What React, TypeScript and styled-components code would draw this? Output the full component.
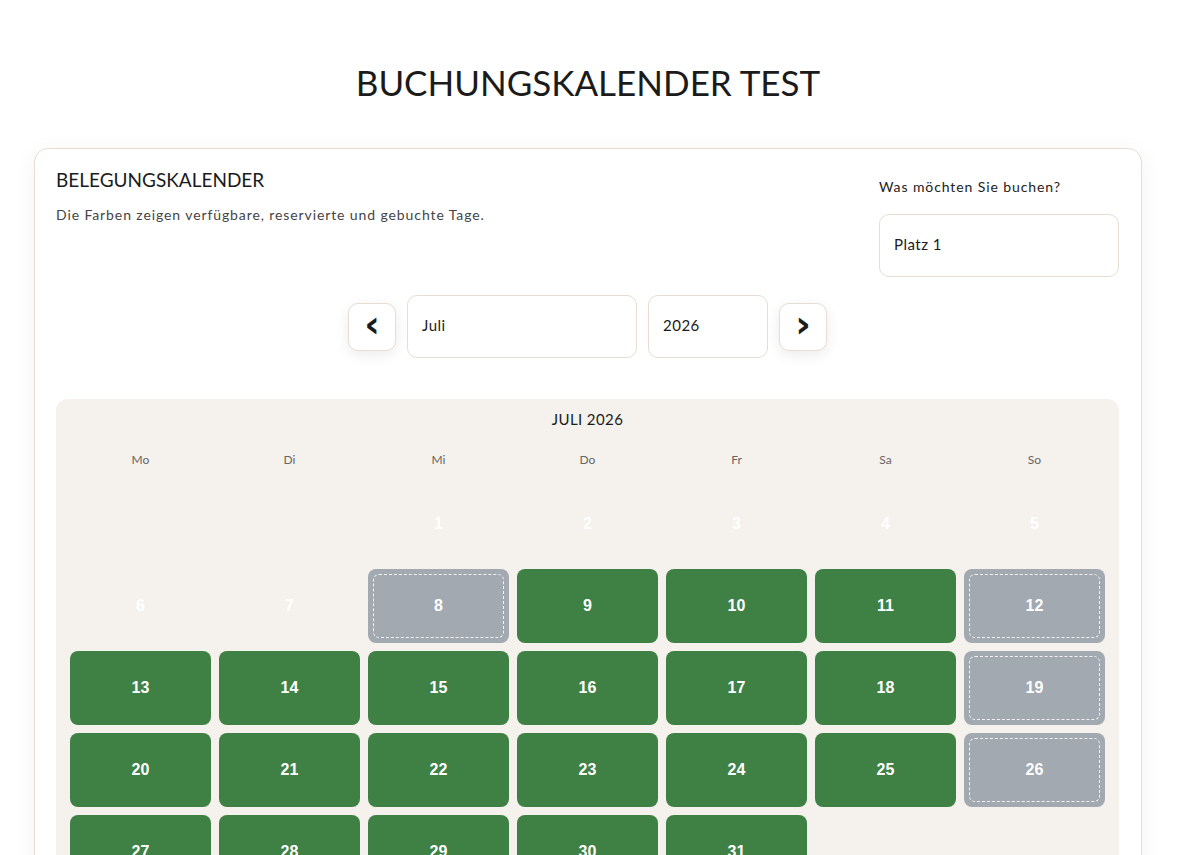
import styled, { createGlobalStyle } from "styled-components";

const GlobalStyle = createGlobalStyle`
  body {
    margin: 0;
    background: #fff;
    font-family: Lato, "Noto Sans", sans-serif;
    color: #1d1d1d;
  }
`;

type DayState = "past" | "free" | "booked";

const YEAR = 2026;
const MONTH = 6; // Juli, 0-based
const bookedDays = [8, 12, 19, 26];
const firstFreeDay = 8;
const weekdays = ["Mo", "Di", "Mi", "Do", "Fr", "Sa", "So"];

const buildDays = () => {
  const first = new Date(YEAR, MONTH, 1).getDay();
  const offset = (first + 6) % 7;
  const count = new Date(YEAR, MONTH + 1, 0).getDate();
  const cells: ({ day: number; state: DayState } | null)[] = [];
  for (let i = 0; i < offset; i++) cells.push(null);
  for (let d = 1; d <= count; d++) {
    const state: DayState =
      d < firstFreeDay ? "past" : bookedDays.includes(d) ? "booked" : "free";
    cells.push({ day: d, state });
  }
  return cells;
};

const App = () => {
  const cells = buildDays();
  return (
    <Page>
      <GlobalStyle />
      <PageTitle>BUCHUNGSKALENDER TEST</PageTitle>
      <Card>
        <CardHeader>
          <div>
            <CardTitle>BELEGUNGSKALENDER</CardTitle>
            <CardText>
              Die Farben zeigen verfügbare, reservierte und gebuchte Tage.
            </CardText>
          </div>
          <SideField>
            <FieldLabel>Was möchten Sie buchen?</FieldLabel>
            <SelectBox width={240}>Platz 1</SelectBox>
          </SideField>
        </CardHeader>

        <NavRow>
          <NavButton aria-label="Vorheriger Monat">‹</NavButton>
          <SelectBox width={230}>Juli</SelectBox>
          <SelectBox width={120}>2026</SelectBox>
          <NavButton aria-label="Nächster Monat">›</NavButton>
        </NavRow>

        <CalendarPanel>
          <MonthTitle>JULI 2026</MonthTitle>
          <Grid>
            {weekdays.map((w) => (
              <Weekday key={w}>{w}</Weekday>
            ))}
          </Grid>
          <Grid>
            {cells.map((c, i) =>
              c ? (
                <DayCell key={i} state={c.state}>
                  {c.day}
                </DayCell>
              ) : (
                <EmptyCell key={i} />
              )
            )}
          </Grid>
        </CalendarPanel>
      </Card>
    </Page>
  );
};

export default App;

const Page = styled.div`
  padding: 60px 34px 40px 34px;
  max-width: 1108px;
`;

const PageTitle = styled.h1`
  margin: 0 0 44px 0;
  text-align: center;
  font-size: 35px;
  font-weight: 400;
  line-height: 44px;
  color: #1b1b1b;
`;

const Card = styled.div`
  border: 1px solid #e7ddd3;
  border-radius: 14px;
  padding: 20px 22px 22px 21px;
  background: #fff;
  box-shadow: 0 4px 24px rgba(0, 0, 0, 0.05);
`;

const CardHeader = styled.div`
  display: flex;
  justify-content: space-between;
  align-items: flex-start;
`;

const CardTitle = styled.h2`
  margin: 0;
  font-size: 19px;
  font-weight: 400;
  line-height: 22px;
  color: #1b1b1b;
`;

const CardText = styled.p`
  margin: 15px 0 0 0;
  font-size: 14px;
  line-height: 18px;
  letter-spacing: 0.9px;
  color: #444;
`;

const SideField = styled.div`
  display: flex;
  flex-direction: column;
  padding-top: 9px;
`;

const FieldLabel = styled.label`
  font-size: 14px;
  line-height: 18px;
  letter-spacing: 0.9px;
  color: #222;
  margin-bottom: 18px;
`;

const SelectBox = styled.div<{ width: number }>`
  width: ${(p) => p.width}px;
  height: 63px;
  box-sizing: border-box;
  border: 1px solid #e7ddd3;
  border-radius: 10px;
  padding: 0 14px 4px 14px;
  display: flex;
  align-items: center;
  font-size: 15px;
  letter-spacing: 0.5px;
  color: #1b1b1b;
  background: #fff;
`;

const NavRow = styled.div`
  display: flex;
  justify-content: center;
  align-items: center;
  gap: 11px;
  margin-top: 18px;
`;

const NavButton = styled.button`
  width: 48px;
  height: 48px;
  border: 1px solid #e7ddd3;
  border-radius: 10px;
  background: #fff;
  box-shadow: 0 4px 14px rgba(0, 0, 0, 0.08);
  font-family: "DejaVu Sans", sans-serif;
  font-size: 38px;
  font-weight: 700;
  line-height: 1;
  color: #1b1b1b;
  padding: 0 0 5px 0;
  cursor: pointer;
`;

const CalendarPanel = styled.div`
  margin-top: 41px;
  background: #f5f1ed;
  border-radius: 12px;
  padding: 10px 14px 14px 14px;
`;

const MonthTitle = styled.div`
  text-align: center;
  font-size: 15px;
  line-height: 20px;
  letter-spacing: 0.4px;
  color: #1b1b1b;
  margin-bottom: 23px;
`;

const Grid = styled.div`
  display: grid;
  grid-template-columns: repeat(7, 1fr);
  gap: 8px;
`;

const Weekday = styled.div`
  text-align: center;
  font-size: 12px;
  line-height: 16px;
  color: #666;
  margin-bottom: 19px;
`;

const EmptyCell = styled.div`
  height: 74px;
`;

const DayCell = styled.div<{ state: DayState }>`
  position: relative;
  height: 74px;
  border-radius: 8px;
  display: flex;
  align-items: center;
  justify-content: center;
  font-family: "Liberation Sans", Arial, sans-serif;
  font-weight: 700;
  font-size: 16px;
  color: #fff;
  background: ${(p) =>
    p.state === "free" ? "#3f8145" : p.state === "booked" ? "#a2a9b1" : "transparent"};

  ${(p) =>
    p.state === "booked" &&
    `
    &::after {
      content: "";
      position: absolute;
      inset: 5px;
      border: 1px dashed rgba(255, 255, 255, 0.85);
      border-radius: 6px;
    }
  `}
`;
